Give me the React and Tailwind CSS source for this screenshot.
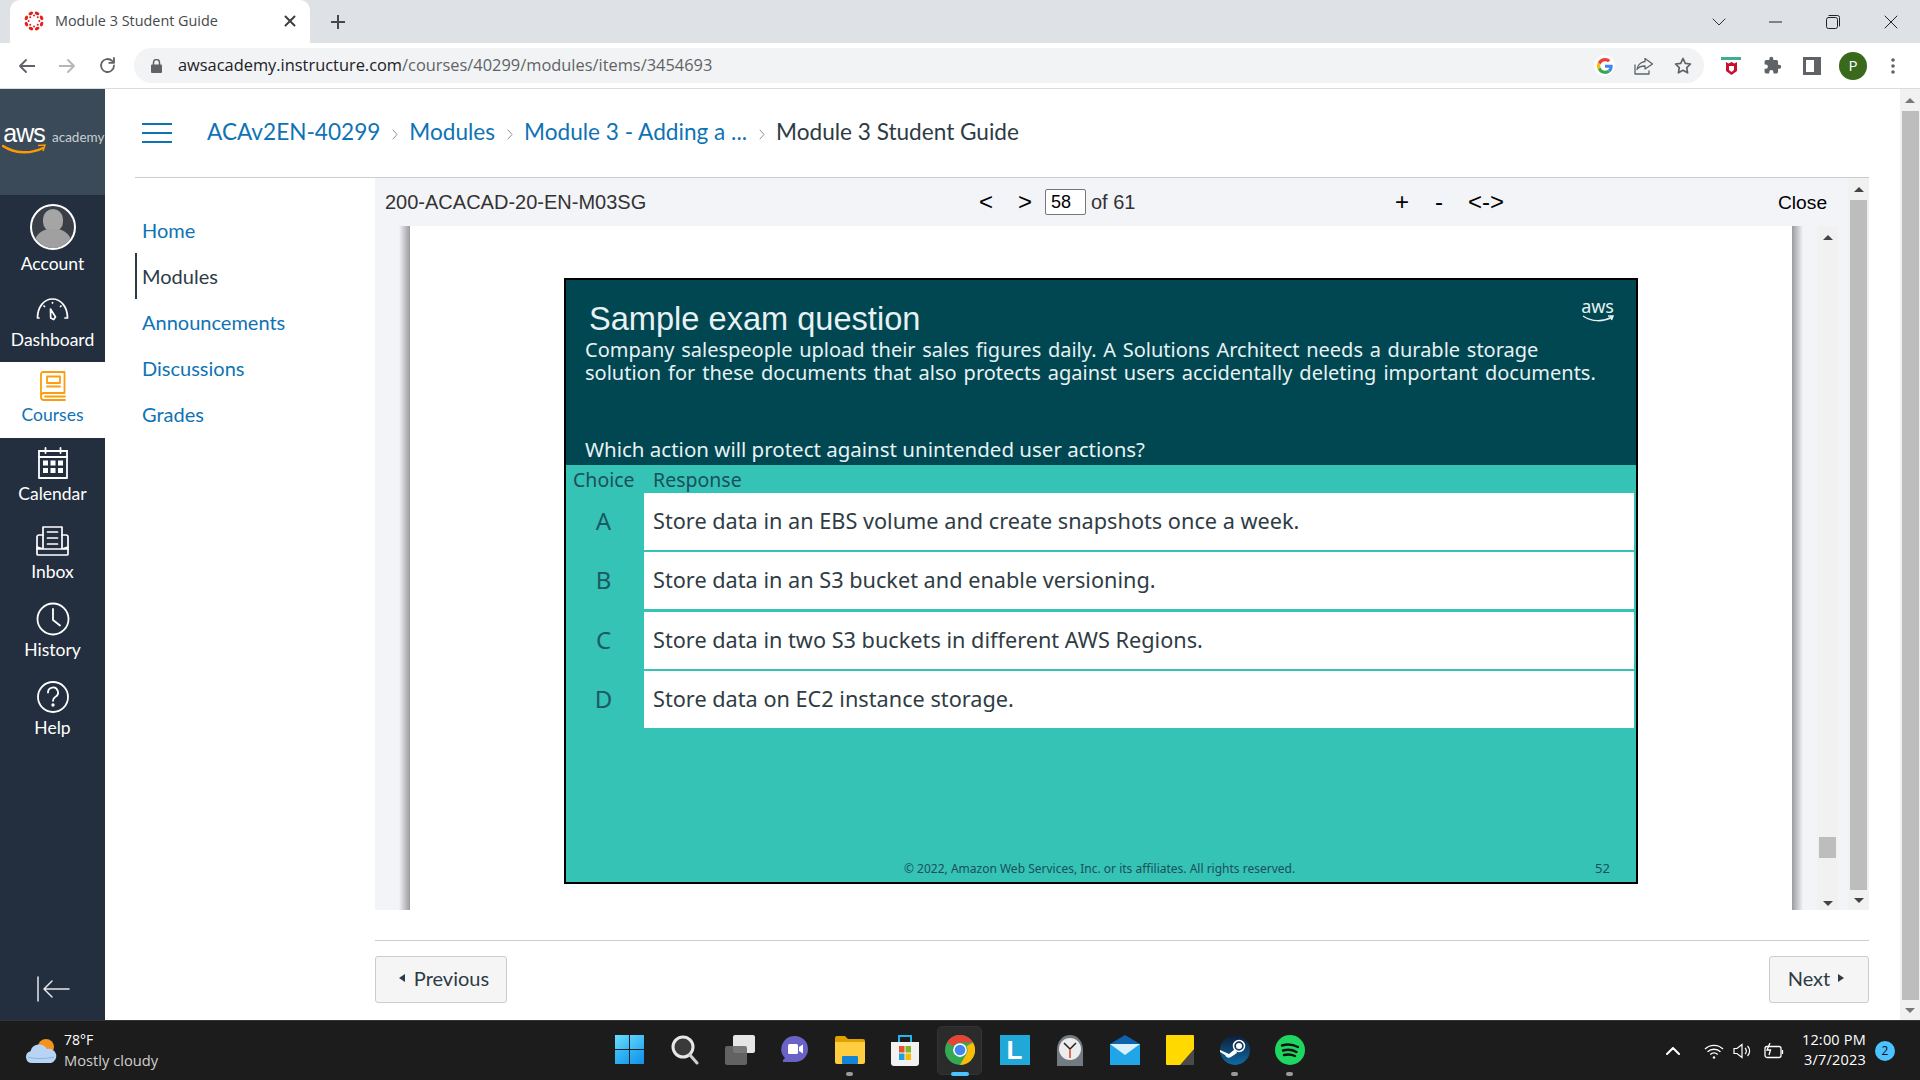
import { Fragment } from 'react';

const lato = "font-['Lato',sans-serif]";
const arial = "font-['Liberation_Sans',sans-serif]";
const slideFont = "font-['Noto_Sans',sans-serif]";
const segoe = "font-['Open_Sans',sans-serif]";

const Stroke = ({ w = 24, h = 24, vb, sw = 2, color = 'currentColor', children, className = '' }) => (
  <svg width={w} height={h} viewBox={vb || `0 0 ${w} ${h}`} fill="none" stroke={color} strokeWidth={sw} strokeLinecap="round" strokeLinejoin="round" className={className}>
    {children}
  </svg>
);

function CanvasLogo() {
  const dots = [0, 45, 90, 135, 180, 225, 270, 315];
  return (
    <svg width="20" height="20" viewBox="0 0 20 20" className="shrink-0">
      <g fill="#e2231a">
        {dots.map((a) => (
          <Fragment key={a}>
            <circle cx={10 + 5.4 * Math.cos((a * Math.PI) / 180)} cy={10 + 5.4 * Math.sin((a * Math.PI) / 180)} r="1" />
            <ellipse cx="10" cy="1.8" rx="2.4" ry="1.6" transform={`rotate(${a + 22} 10 10)`} />
          </Fragment>
        ))}
      </g>
    </svg>
  );
}

function TabStrip() {
  return (
    <div className="h-[43px] bg-[#dee1e6] flex items-end shrink-0">
      <div className="ml-[10px] w-[300px] h-[43px] mt-auto bg-white rounded-t-[10px] flex items-center pl-[14px] pr-[14px] pb-[2px]">
        <CanvasLogo />
        <span className={`ml-[11px] text-[14.4px] text-[#45494d] ${segoe} flex-1 whitespace-nowrap`}>Module 3 Student Guide</span>
        <Stroke w={12} h={12} sw={2} color="#3c4043"><path d="M1.5 1.5l9 9M10.5 1.5l-9 9" /></Stroke>
      </div>
      <div className="ml-[20px] h-[43px] flex items-center">
        <Stroke w={16} h={16} sw={2} color="#45484c"><path d="M8 1v14M1 8h14" strokeLinecap="butt" /></Stroke>
      </div>
      <div className="flex-1" />
      <div className="h-[43px] flex items-center text-[#2c2c2c]">
        <Stroke w={14} h={8} sw={1} color="#333"><path d="M1 1l6 6 6-6" /></Stroke>
        <div className="w-[43px]" />
        <Stroke w={13} h={2} sw={1} color="#222"><path d="M0 1h13" /></Stroke>
        <div className="w-[44px]" />
        <Stroke w={14} h={14} sw={1} color="#222"><rect x="0.5" y="2.5" width="11" height="11" rx="2" /><path d="M3 .5h8.5a2 2 0 0 1 2 2V11" /></Stroke>
        <div className="w-[44px]" />
        <Stroke w={14} h={14} sw={1} color="#222"><path d="M1 1l12 12M13 1L1 13" /></Stroke>
        <div className="w-[22px]" />
      </div>
    </div>
  );
}

function GoogleG() {
  return (
    <svg width="16" height="16" viewBox="0 0 48 48">
      <path fill="#EA4335" d="M24 9.5c3.5 0 6.7 1.2 9.2 3.6l6.9-6.9C35.900 2.400 30.400 0 24 0 14.600 0 6.500 5.400 2.600 13.200l8 6.200C12.500 13.700 17.800 9.500 24 9.500z" />
      <path fill="#4285F4" d="M47 24.500c0-1.600-.1-3.100-.4-4.500H24v9h12.900c-.6 3-2.200 5.500-4.700 7.200l7.700 6c4.500-4.200 7.100-10.300 7.100-17.700z" />
      <path fill="#FBBC05" d="M10.500 28.600A14.500 14.500 0 0 1 10.500 19.400l-8-6.200a24 24 0 0 0 0 21.600z" />
      <path fill="#34A853" d="M24 48c6.500 0 11.900-2.100 15.900-5.800l-7.700-6c-2.200 1.400-4.900 2.300-8.200 2.300-6.200 0-11.500-4.200-13.400-9.900l-8 6.200C6.500 42.600 14.600 48 24 48z" />
    </svg>
  );
}

function Toolbar() {
  return (
    <div className="h-[46px] bg-white border-b border-[#dadce0] flex items-center shrink-0">
      <div className="w-[135px] pl-[19px] flex items-center gap-[24px] shrink-0">
        <Stroke w={16} h={14} sw={1.8} color="#5f6368"><path d="M7 1L1 7l6 6M1 7h15" /></Stroke>
        <Stroke w={16} h={14} sw={1.8} color="#b4b6b9"><path d="M9 1l6 6-6 6M15 7H0" /></Stroke>
        <Stroke w={17} h={17} sw={1.8} color="#5f6368"><path d="M15 8.500a6.500 6.500 0 1 1-1.900-4.600L15 5.800M15 1v4.800h-4.800" /></Stroke>
      </div>
      <div className="w-[1570px] h-[35px] -ml-[1px] bg-[#f1f3f4] rounded-full flex items-center pl-[17px] pr-[12px]">
        <svg width="11" height="14" viewBox="0 0 11 14" fill="#5f6368"><rect x="0" y="5.500" width="11" height="8.500" rx="1" /><path d="M2.500 6V3.500a3 3 0 0 1 6 0V6" fill="none" stroke="#5f6368" strokeWidth="1.500" /></svg>
        <span className={`ml-[16px] text-[16.4px] ${segoe} flex-1 text-[#5f6368] whitespace-nowrap`}>
          <span className="text-[#202124]">awsacademy.instructure.com</span>/courses/40299/modules/items/3454693
        </span>
        <div className="w-[21px] h-[21px] bg-white rounded-full flex items-center justify-center"><GoogleG /></div>
        <div className="w-[19px]" />
        <Stroke w={20} h={18} sw={1.3} color="#5f6368"><path d="M11 1.500L18.500 7 11 12V9c-4 0-6.500 1-8 3.500C3.500 8.500 6.500 5 11 4.500zM1 8v9h14v-3" /></Stroke>
        <div className="w-[20px]" />
        <Stroke w={18} h={18} sw={1.7} color="#5f6368"><path d="M9 1.500l2.300 4.800 5.200.7-3.800 3.600.9 5.200L9 13.300l-4.600 2.500.9-5.200L1.500 7l5.200-.7z" /></Stroke>
      </div>
      <div className="flex-1 flex items-center pl-[17px]">
        <div className="w-[20px] flex flex-col items-center">
          <div className="w-[20px] h-[3px] bg-[#3eb08f]" />
          <svg width="11" height="13" viewBox="0 0 11 13" className="mt-[2px]"><path d="M0 0l2.500 1.500L5.500 0l3 1.500L11 0v9l-5.500 4L0 9z" fill="#c8102e" /><path d="M3 4h5v4l-2.500 2L3 8z" fill="#fff" /></svg>
        </div>
        <svg width="19" height="19" viewBox="0 0 24 24" fill="#5f6368" className="ml-[22px]"><path d="M20.500 11H19V7a2 2 0 0 0-2-2h-4V3.500a2.500 2.500 0 0 0-5 0V5H4a2 2 0 0 0-2 2v3.800h1.500a2.700 2.700 0 0 1 0 5.400H2V20a2 2 0 0 0 2 2h3.800v-1.500a2.700 2.700 0 0 1 5.400 0V22H17a2 2 0 0 0 2-2v-4h1.500a2.500 2.500 0 0 0 0-5z" /></svg>
        <div className="ml-[21px] w-[18px] h-[18px] border-[3px] border-[#5f6368] flex justify-end"><div className="w-[4px] h-full bg-[#5f6368]" /></div>
        <div className={`ml-[18px] w-[28px] h-[28px] rounded-full bg-[#38691c] text-white text-[15px] flex items-center justify-center ${segoe}`}>P</div>
        <svg width="4" height="16" viewBox="0 0 4 16" fill="#5f6368" className="ml-[24px]"><circle cx="2" cy="2" r="1.8" /><circle cx="2" cy="8" r="1.8" /><circle cx="2" cy="14" r="1.8" /></svg>
      </div>
    </div>
  );
}

const navIcons = {
  Account: (
    <div className="w-[46px] h-[46px] rounded-full border-2 border-white overflow-hidden bg-[#3a3f47] flex flex-col items-center">
      <div className="w-[20px] h-[24px] mt-[3px] rounded-full bg-[#a5a5a5]" />
      <div className="w-[38px] h-[20px] -mt-[3px] rounded-t-[16px] bg-[#a0a0a0]" />
    </div>
  ),
  Dashboard: (
    <Stroke w={33} h={24} sw={1.7} color="#fff">
      <path d="M3 21H1.500C1.500 10 8 2 16.500 2S31.500 10 31.500 21H29" />
      <path d="M14.500 12l5 8-1.800 2.500-3-1.500z" />
      <path d="M8 9l.5.5M25 9l-.5.5M16.500 5.500v.5" />
    </Stroke>
  ),
  Courses: (
    <Stroke w={26} h={30} sw={1.8} color="#fb9d0e">
      <path d="M24.500 1H3A2 2 0 0 0 1 3v23a3 3 0 0 0 3 3h21M1 25a3 3 0 0 1 3-3h20.500V1M5 25.500h20" />
      <rect x="7" y="5.500" width="13" height="6.500" />
      <path d="M7 15.500h13" />
    </Stroke>
  ),
  Calendar: (
    <Stroke w={30} h={32} sw={1.8} color="#fff">
      <rect x="1" y="4" width="28" height="27" />
      <path d="M1 10h28M7.500 1v5M22.500 1v5M1 4h28" />
      <g fill="#fff" stroke="none">
        <rect x="5" y="13.500" width="5" height="5" /><rect x="12.500" y="13.500" width="5" height="5" /><rect x="20" y="13.500" width="5" height="5" />
        <rect x="5" y="21" width="5" height="5" /><rect x="12.500" y="21" width="5" height="5" /><rect x="20" y="21" width="5" height="5" />
      </g>
    </Stroke>
  ),
  Inbox: (
    <Stroke w={33} h={30} sw={1.7} color="#fff">
      <path d="M7 9H3a2 2 0 0 0-2 2v17a1 1 0 0 0 1 1h29a1 1 0 0 0 1-1V11a2 2 0 0 0-2-2h-4" />
      <path d="M7 23V1h19v22zM1 21l6 2M32 21l-6 2M1 23h6M26 23h6" />
      <path d="M11.500 6h10M11.500 12h10M11.500 18h10" />
    </Stroke>
  ),
  History: (
    <Stroke w={34} h={34} sw={1.8} color="#fff">
      <circle cx="17" cy="17" r="15.500" />
      <path d="M17 7v11l7 5.500" />
    </Stroke>
  ),
  Help: (
    <Stroke w={32} h={32} sw={1.8} color="#fff">
      <circle cx="16" cy="16" r="15" />
      <path d="M11 11.500a5 5 0 1 1 7.500 4.300c-1.600 1-2.500 2-2.500 4" />
      <circle cx="16" cy="24" r="0.8" fill="#fff" />
    </Stroke>
  ),
};

const navItems = [
  { label: 'Account', h: 'h-[91px]', icon: 'h-[46px]', pad: 'pt-[9px]', gap: 'mt-[3px]' },
  { label: 'Dashboard', h: 'h-[76px]', icon: 'h-[24px]', pad: 'pt-[11px]', gap: 'mt-[8px]' },
  { label: 'Courses', h: 'h-[76px]', icon: 'h-[30px]', pad: 'pt-[9px]', gap: 'mt-[3px]', active: true },
  { label: 'Calendar', h: 'h-[78px]', icon: 'h-[32px]', pad: 'pt-[9px]', gap: 'mt-[4px]' },
  { label: 'Inbox', h: 'h-[78px]', icon: 'h-[30px]', pad: 'pt-[10px]', gap: 'mt-[5px]' },
  { label: 'History', h: 'h-[78px]', icon: 'h-[34px]', pad: 'pt-[8px]', gap: 'mt-[3px]' },
  { label: 'Help', h: 'h-[78px]', icon: 'h-[32px]', pad: 'pt-[9px]', gap: 'mt-[4px]' },
];

function Sidebar() {
  return (
    <div className="w-[105px] shrink-0 bg-[#232f3f] flex flex-col items-stretch">
      <div className="h-[106px] bg-[#3a4a58] flex items-start pl-[1px] pt-[32px] shrink-0 overflow-hidden">
        <div className="flex flex-col items-center w-[46px] shrink-0">
          <span className={`${arial} text-white text-[25px] leading-[24px] tracking-[-1px]`}>aws</span>
          <svg width="44" height="11" viewBox="0 0 44 11" className="-mt-[1px]"><path d="M1 2c12 8 28 8 40 2" fill="none" stroke="#f90" strokeWidth="2.5" strokeLinecap="round" /><path d="M36 1.500l7-.5-2 6" fill="none" stroke="#f90" strokeWidth="1.5" /></svg>
        </div>
        <span className={`${lato} text-[#c9ced3] text-[13.5px] ml-[5px] mt-[7px] leading-[18px]`}>academy</span>
      </div>
      {navItems.map((n) => (
        <div key={n.label} className={`${n.h} ${n.pad} shrink-0 flex flex-col items-center ${n.active ? 'bg-white text-[#0e73b5]' : 'text-white'}`}>
          <div className={`${n.icon} flex items-center`}>{navIcons[n.label]}</div>
          <div className={`${lato} text-[17.5px] leading-[22px] ${n.gap}`}>{n.label}</div>
        </div>
      ))}
      <div className="flex-1" />
      <div className="h-[44px] flex justify-center shrink-0">
        <Stroke w={34} h={26} sw={1.5} color="#e8e8e8"><path d="M2 1v24M33 13H8M16 5l-8 8 8 8" /></Stroke>
      </div>
    </div>
  );
}

function Breadcrumb() {
  const crumb = 'text-[#0e73b5]';
  const Sep = () => (
    <Stroke w={6} h={11} sw={1} color="#8b969e" className="mx-[11.5px] mt-[5px]"><path d="M1 1l4 4.500-4 4.500" /></Stroke>
  );
  return (
    <div className={`h-[89px] border-b border-[#c7cdd1] flex items-center shrink-0 ${lato} text-[22.6px]`}>
      <div className="w-[30px] ml-[7px] mr-[35px] flex flex-col gap-[7px] -mt-[1px]">
        <div className="h-[2px] bg-[#0e73b5]" />
        <div className="h-[2px] bg-[#0e73b5]" />
        <div className="h-[2px] bg-[#0e73b5]" />
      </div>
      <div className="flex items-center -mt-[2px]">
        <span className={crumb}>ACAv2EN-40299</span>
        <Sep />
        <span className={crumb}>Modules</span>
        <Sep />
        <span className={crumb}>Module 3 - Adding a ...</span>
        <Sep />
        <span className="text-[#2d3b45]">Module 3 Student Guide</span>
      </div>
    </div>
  );
}

function CourseNav() {
  const links = ['Home', 'Modules', 'Announcements', 'Discussions', 'Grades'];
  return (
    <div className={`w-[240px] shrink-0 pt-[29px] ${lato} text-[20px] leading-[46px]`}>
      {links.map((l) => (
        <div key={l} className={l === 'Modules' ? 'border-l-2 border-[#2d3b45] pl-[5px] text-[#2d3b45]' : 'pl-[7px] text-[#0e73b5]'}>{l}</div>
      ))}
    </div>
  );
}

function Arrow({ down, color = '#555' }) {
  return (
    <svg width="10" height="5" viewBox="0 0 10 5" fill={color}>
      <path d={down ? 'M0 0h10L5 5z' : 'M0 5h10L5 0z'} />
    </svg>
  );
}

function Scrollbar({ w = 'w-[21px]', end = 'h-[20px]', children, arrow }) {
  return (
    <div className={`${w} bg-[#f1f1f1] shrink-0 flex flex-col items-center`}>
      <div className="h-[22px] shrink-0 flex items-center justify-center"><Arrow color={arrow} /></div>
      {children}
      <div className={`${end} shrink-0 flex items-center justify-center`}><Arrow down color={arrow} /></div>
    </div>
  );
}

function Slide() {
  const rows = [
    ['A', 'Store data in an EBS volume and create snapshots once a week.'],
    ['B', 'Store data in an S3 bucket and enable versioning.'],
    ['C', 'Store data in two S3 buckets in different AWS Regions.'],
    ['D', 'Store data on EC2 instance storage.'],
  ];
  return (
    <div className="w-[1074px] h-[606px] border-2 border-black bg-[#35c3b5] flex flex-col shrink-0">
      <div className="relative h-[185px] bg-[#004752] text-[#e8f2f2] shrink-0">
        <div className={`pl-[19px] ${slideFont}`}>
          <div className={`${arial} w-fit text-[32.6px] leading-[40px] pl-[4px] pt-[19px]`}>Sample exam question</div>
          <div className="w-fit text-[20px] leading-[22.7px] whitespace-nowrap">
            <div className="[word-spacing:1.5px]">Company salespeople upload their sales figures daily. A Solutions Architect needs a durable storage</div>
            <div className="[word-spacing:1.8px]">solution for these documents that also protects against users accidentally deleting important documents.</div>
          </div>
          <div className="w-fit text-[20.5px] leading-[23px] mt-[54px] whitespace-nowrap">Which action will protect against unintended user actions?</div>
        </div>
        <div className="absolute right-[22px] top-[17px] flex flex-col items-center">
          <span className={`${slideFont} text-[18px] leading-[18px]`}>aws</span>
          <svg width="32" height="8" viewBox="0 0 32 8"><path d="M1 1c9 6 20 6 29 1M26 1l5 0-1.500 4" fill="none" stroke="#e8f2f2" strokeWidth="1.5" /></svg>
        </div>
      </div>
      <div className={`h-[28px] pt-[1px] flex items-center text-[19.5px] text-[#1b4f5a] ${slideFont} shrink-0`}>
        <span className="w-[87px] pl-[7px]">Choice</span>
        <span>Response</span>
      </div>
      <div className="flex flex-col gap-[2.4px]">
        {rows.map(([c, t]) => (
          <div key={c} className={`h-[57px] flex ${slideFont}`}>
            <div className="w-[78px] pr-[3px] pb-[1px] flex items-center justify-center text-[24px] text-[#1b5964]">{c}</div>
            <div className="w-[990px] bg-white flex items-center pl-[9px] pb-[1px] text-[21.7px] text-[#2f3c44] whitespace-nowrap">{t}</div>
          </div>
        ))}
      </div>
      <div className={`mt-auto h-[27px] flex items-center text-[#1b4f5a] ${slideFont} shrink-0`}>
        <span className="ml-[338px] w-[691px] text-[12px] whitespace-nowrap">© 2022, Amazon Web Services, Inc. or its affiliates. All rights reserved.</span>
        <span className="text-[13px]">52</span>
      </div>
    </div>
  );
}

function Viewer() {
  return (
    <div className="h-[732px] flex shrink-0">
      <div className="flex-1 flex flex-col min-w-0">
        <div className={`h-[48px] bg-[#f3f4f8] flex items-center shrink-0 ${arial} text-[20px] text-[#333]`}>
          <span className="ml-[10px] w-[594px] whitespace-nowrap">200-ACACAD-20-EN-M03SG</span>
          <span className="text-black text-[24px] w-[39px]">&lt;</span>
          <span className="text-black text-[24px] w-[27px]">&gt;</span>
          <div className="w-[41px] h-[26px] bg-white border border-[#777] rounded-[2px] text-[18px] text-black pl-[5px] leading-[24px]">58</div>
          <span className="ml-[5px] w-[304px] whitespace-nowrap">of 61</span>
          <span className="text-black text-[24px] w-[40px]">+</span>
          <span className="text-black text-[24px] w-[33px]">-</span>
          <span className="text-black text-[24px] w-[310px]">&lt;-&gt;</span>
          <span className="text-black text-[19.2px] mt-[2px]">Close</span>
        </div>
        <div className="flex-1 bg-[#f3f4f8] flex min-h-0">
          <div className="w-[24px] shrink-0" />
          <div className="w-[11px] shrink-0 bg-gradient-to-r from-[#f3f4f8] to-[#9a9a9f]" />
          <div className="w-[1382px] shrink-0 bg-white flex justify-center pt-[52px]">
            <Slide />
          </div>
          <div className="w-[11px] shrink-0 bg-gradient-to-r from-[#9a9a9f] to-[#f3f4f8]" />
          <div className="w-[14px] shrink-0" />
          <Scrollbar arrow="#444" end="h-[14px]">
            <div className="flex-1 flex flex-col justify-end w-[17px] pb-[38px]"><div className="h-[21px] bg-[#bdbdbd]" /></div>
          </Scrollbar>
          <div className="w-[10px] shrink-0" />
        </div>
      </div>
      <Scrollbar arrow="#444">
        <div className="flex-1 w-[17px] bg-[#bdbdbd]" />
      </Scrollbar>
    </div>
  );
}

function PageButtons() {
  const btn = `h-[47px] bg-[#f5f5f5] border border-[#c7cdd1] rounded-[3px] flex items-center justify-center pb-[3px] ${lato} text-[20px] text-[#2d3b45]`;
  return (
    <div className="mt-[30px] border-t border-[#c7cdd1] pt-[15px] flex justify-between">
      <button className={`${btn} w-[132px] gap-[9px] pl-[6px]`}>
        <svg width="6" height="8" viewBox="0 0 6 8" fill="#2d3b45"><path d="M6 0v8L0 4z" /></svg>
        Previous
      </button>
      <button className={`${btn} w-[100px] gap-[8px] pr-[6px]`}>
        Next
        <svg width="6" height="8" viewBox="0 0 6 8" fill="#2d3b45"><path d="M0 0v8l6-4z" /></svg>
      </button>
    </div>
  );
}

function Win11() {
  return (
    <div className="grid grid-cols-2 gap-[1px] w-[29px] h-[29px]">
      <div className="bg-gradient-to-br from-[#6fdcfb] to-[#2cb7f2]" />
      <div className="bg-gradient-to-br from-[#5fd0fa] to-[#25aef0]" />
      <div className="bg-gradient-to-br from-[#3cc0f7] to-[#1a9cec]" />
      <div className="bg-gradient-to-br from-[#30b4f5] to-[#128fe8]" />
    </div>
  );
}

const taskIcons = [
  { key: 'win', el: <Win11 /> },
  { key: 'search', el: (
    <svg width="28" height="30" viewBox="0 0 28 30" fill="none"><circle cx="12" cy="12" r="10" fill="#3a3a3a" stroke="#e8e8e8" strokeWidth="3" /><path d="M19 20l7 8" stroke="#cfcfcf" strokeWidth="3" strokeLinecap="round" /></svg>
  ) },
  { key: 'task', el: (
    <div className="w-[30px] h-[30px] flex flex-col">
      <div className="ml-auto w-[22px] h-[22px] rounded-[2px] bg-[#e6e6e6] -mb-[15px]" />
      <div className="w-[22px] h-[22px] mt-[8px] rounded-[2px] bg-[#6a6a6a]/90" />
    </div>
  ) },
  { key: 'chat', el: (
    <svg width="28" height="30" viewBox="0 0 28 30"><path d="M14 1a13 13 0 0 1 0 26H2v-2l2-2A13 13 0 0 1 14 1z" fill="#6a62c4" /><rect x="7" y="9" width="10" height="10" rx="1.5" fill="#fff" /><path d="M18 12l4-2.500v9L18 16z" fill="#fff" /></svg>
  ) },
  { key: 'files', dot: true, el: (
    <svg width="30" height="28" viewBox="0 0 30 28"><path d="M0 2a2 2 0 0 1 2-2h8l3 3h15a2 2 0 0 1 2 2v4H0z" fill="#e0a100" /><path d="M0 6h30v20a2 2 0 0 1-2 2H2a2 2 0 0 1-2-2z" fill="#ffcd3f" /><rect x="7" y="20" width="16" height="8" rx="1" fill="#1484d6" /></svg>
  ) },
  { key: 'store', el: (
    <svg width="28" height="32" viewBox="0 0 28 32"><path d="M8 8V2h12v6" fill="none" stroke="#22b5f0" strokeWidth="2" /><path d="M0 8h28v21a3 3 0 0 1-3 3H3a3 3 0 0 1-3-3z" fill="#f2f2f2" /><rect x="8" y="12" width="5.5" height="6.5" fill="#e8512b" /><rect x="14.5" y="12" width="5.5" height="6.5" fill="#7eb82a" /><rect x="8" y="19.5" width="5.5" height="6.5" fill="#1ba1e2" /><rect x="14.5" y="19.5" width="5.5" height="6.5" fill="#fbb900" /></svg>
  ) },
  { key: 'chrome', active: true, el: (
    <svg width="30" height="30" viewBox="0 0 48 48"><circle cx="24" cy="24" r="24" fill="#34a853" /><path d="M24 0a24 24 0 0 1 20.800 12H24a12 12 0 0 0-10.400 6L3.200 12A24 24 0 0 1 24 0z" fill="#ea4335" /><path d="M44.800 12A24 24 0 0 1 24 48l10.400-18a12 12 0 0 0 0-12z" fill="#fbbc05" /><circle cx="24" cy="24" r="11" fill="#fff" /><circle cx="24" cy="24" r="8.5" fill="#4285f4" /></svg>
  ) },
  { key: 'l', el: (
    <div className={`w-[30px] h-[30px] bg-[#1fa8d8] flex items-center justify-center text-white text-[26px] font-bold leading-none ${arial}`}>L</div>
  ) },
  { key: 'clock', el: (
    <svg width="30" height="32" viewBox="0 0 30 32"><path d="M2 16C2 7 8 1 15 1s13 6 13 15v16H2z" fill="#737a82" /><circle cx="15" cy="15" r="11" fill="#ececec" /><path d="M15 15L9 9M15 15l6-6" stroke="#222" strokeWidth="1.5" /><path d="M15 15v9" stroke="#d9452b" strokeWidth="1.5" /></svg>
  ) },
  { key: 'mail', el: (
    <svg width="30" height="30" viewBox="0 0 30 30"><path d="M0 9L15 0l15 9v6H0z" fill="#0f62ae" /><rect y="9" width="30" height="21" fill="#1fa5e8" /><path d="M0 9h30L15 20z" fill="#d8f1fc" /></svg>
  ) },
  { key: 'sticky', el: (
    <svg width="28" height="30" viewBox="0 0 28 30"><path d="M1 0h26a1 1 0 0 1 1 1v29H1a1 1 0 0 1-1-1V1a1 1 0 0 1 1-1z" fill="#ffd900" /><path d="M28 14v16H14z" fill="#4a4a48" /></svg>
  ) },
  { key: 'steam', dot: true, el: (
    <svg width="30" height="30" viewBox="0 0 30 30"><defs><linearGradient id="steamBg" x1="0" y1="0" x2="0" y2="1"><stop offset="0" stopColor="#0f1d37" /><stop offset="1" stopColor="#0f6ba5" /></linearGradient></defs><circle cx="15" cy="15" r="15" fill="url(#steamBg)" /><circle cx="19" cy="11" r="5.5" fill="none" stroke="#fff" strokeWidth="1.5" /><circle cx="19" cy="11" r="3" fill="#fff" /><path d="M0 15l9 4 6-5 2 4-6 4a4 4 0 0 1-6-2L0 17z" fill="#fff" /></svg>
  ) },
  { key: 'spotify', dot: true, el: (
    <svg width="30" height="30" viewBox="0 0 30 30" fill="none"><circle cx="15" cy="15" r="15" fill="#1ed760" /><path d="M7 10.500c5-1.500 11-1 16 1.500M8 15.500c4.500-1.200 9.500-.8 13.500 1.500M9 20c4-1 7.500-.6 11 1" stroke="#111" strokeWidth="2.4" strokeLinecap="round" /></svg>
  ) },
];

function Taskbar() {
  return (
    <div className={`h-[60px] bg-[#1c1c1c] border-t border-[#333] flex items-center shrink-0 text-white ${segoe}`}>
      <div className="w-[602px] flex items-center pl-[25px] shrink-0">
        <svg width="32" height="26" viewBox="0 0 32 26"><circle cx="21" cy="9" r="8" fill="#f2941c" /><path d="M7 25a6 6 0 0 1-1.500-11.800A9 9 0 0 1 22 11a6 6 0 0 1 4 14z" fill="#b7d4f4" /><path d="M3 19c6 2 18 2 26 0" stroke="#8cb2e0" strokeWidth="1" fill="none" /></svg>
        <div className="ml-[7px] flex flex-col -mt-[2px]">
          <span className="text-[14px] leading-[20px]">78°F</span>
          <span className="text-[14.7px] leading-[20px] text-[#cfcfcf] whitespace-nowrap">Mostly cloudy</span>
        </div>
      </div>
      <div className="flex items-center h-full">
        {taskIcons.map((t) => (
          <div key={t.key} className="w-[55px] h-full relative flex items-center justify-center">
            {t.active && <div className="absolute inset-x-[5px] top-[5px] bottom-[5px] bg-[#2b2b2b] border border-[#333] rounded-[5px]" />}
            <div className="relative -mt-[2px]">{t.el}</div>
            {t.dot && <div className="absolute bottom-[4px] left-[24px] w-[7px] h-[4px] rounded-full bg-[#9a9a9a]" />}
            {t.active && <div className="absolute bottom-[4px] left-[19px] w-[18px] h-[4px] rounded-full bg-[#4cc2ff]" />}
          </div>
        ))}
      </div>
      <div className="flex-1 flex items-center justify-end">
        <Stroke w={14} h={8} sw={2} color="#fff"><path d="M1 7l6-6 6 6" /></Stroke>
        <svg width="20" height="16" viewBox="0 0 20 16" fill="none" stroke="#fff" strokeWidth="1.3" className="ml-[24px]"><path d="M1 6a13 13 0 0 1 18 0M3.500 8.800a9.500 9.500 0 0 1 13 0M6.300 11.400a5.500 5.500 0 0 1 7.400 0" /><circle cx="10" cy="14.500" r="1.2" fill="#fff" stroke="none" /></svg>
        <svg width="20" height="16" viewBox="0 0 20 16" fill="none" stroke="#fff" strokeWidth="1.2" className="ml-[9px]"><path d="M1 5.500h3L9 1.500v13l-5-4H1zM12 5a4 4 0 0 1 0 6M14.500 3a7 7 0 0 1 0 10" /></svg>
        <svg width="21" height="16" viewBox="0 0 21 16" fill="none" stroke="#fff" strokeWidth="1.3" className="ml-[11px]"><rect x="1" y="3.500" width="16" height="11" rx="2" /><path d="M18.500 7v4" /><path d="M6 0L3 7h3.500L5 12" /></svg>
        <div className="ml-[17px] flex flex-col items-end text-[14.5px] leading-[20px] tracking-[0.2px] -mt-[2px]">
          <span className="whitespace-nowrap">12:00 PM</span>
          <span>3/7/2023</span>
        </div>
        <div className="ml-[9px] mr-[25px] w-[20px] h-[20px] rounded-full bg-[#4cc2ff] text-[#111] text-[12px] flex items-center justify-center">2</div>
      </div>
    </div>
  );
}

export default function App() {
  return (
    <div className="w-[1920px] h-[1080px] overflow-hidden flex flex-col bg-white">
      <TabStrip />
      <Toolbar />
      <div className="h-[931px] flex shrink-0">
        <Sidebar />
        <div className="flex-1 pl-[30px] pr-[31px] flex flex-col min-w-0">
          <Breadcrumb />
          <div className="flex">
            <CourseNav />
            <div className="flex-1 min-w-0 flex flex-col">
              <Viewer />
              <PageButtons />
            </div>
          </div>
        </div>
        <Scrollbar w="w-[20px]" arrow="#777">
          <div className="flex-1 w-[17px] bg-[#bdbdbd]" />
        </Scrollbar>
      </div>
      <Taskbar />
    </div>
  );
}
